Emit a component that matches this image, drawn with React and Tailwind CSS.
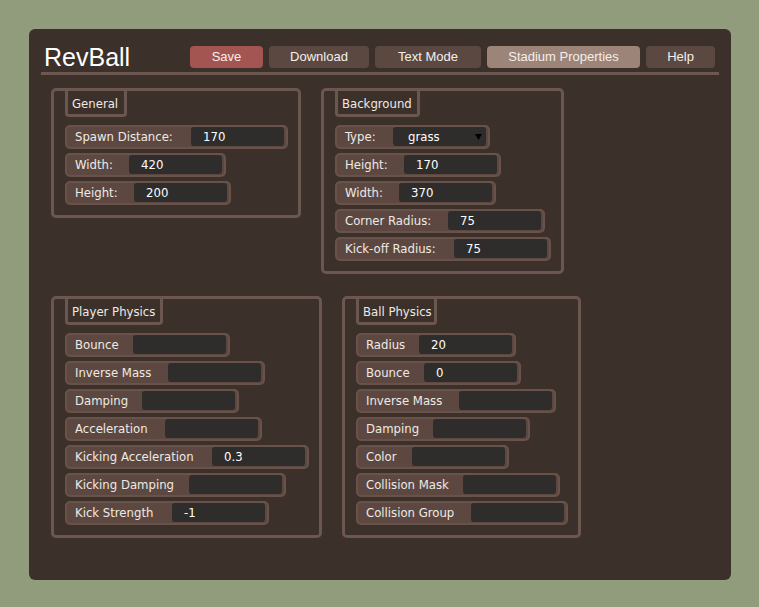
const buttons = [
  { label: 'Save', cls: 'w-[73px] bg-[#a35552]' },
  { label: 'Download', cls: 'w-[100px] bg-[#5b4941]' },
  { label: 'Text Mode', cls: 'w-[106px] bg-[#5b4941]' },
  { label: 'Stadium Properties', cls: 'w-[153px] bg-[#9c8478]' },
  { label: 'Help', cls: 'w-[69px] bg-[#5b4941]' },
];

const general = [
  { label: 'Spawn Distance:', w: 'w-[124px]', value: '170' },
  { label: 'Width:', w: 'w-[62px]', value: '420' },
  { label: 'Height:', w: 'w-[67px]', value: '200' },
];

const background = [
  { label: 'Height:', w: 'w-[67px]', value: '170' },
  { label: 'Width:', w: 'w-[62px]', value: '370' },
  { label: 'Corner Radius:', w: 'w-[111px]', value: '75' },
  { label: 'Kick-off Radius:', w: 'w-[117px]', value: '75' },
];

const player = [
  { label: 'Bounce', w: 'w-[66px]', value: '' },
  { label: 'Inverse Mass', w: 'w-[101px]', value: '' },
  { label: 'Damping', w: 'w-[75px]', value: '' },
  { label: 'Acceleration', w: 'w-[98px]', value: '' },
  { label: 'Kicking Acceleration', w: 'w-[145px]', value: '0.3' },
  { label: 'Kicking Damping', w: 'w-[122px]', value: '' },
  { label: 'Kick Strength', w: 'w-[105px]', value: '-1' },
];

const ball = [
  { label: 'Radius', w: 'w-[61px]', value: '20' },
  { label: 'Bounce', w: 'w-[66px]', value: '0' },
  { label: 'Inverse Mass', w: 'w-[101px]', value: '' },
  { label: 'Damping', w: 'w-[75px]', value: '' },
  { label: 'Color', w: 'w-[54px]', value: '' },
  { label: 'Collision Mask', w: 'w-[105px]', value: '' },
  { label: 'Collision Group', w: 'w-[113px]', value: '' },
];

const labelFont = "font-['DejaVu_Sans_Condensed','DejaVu_Sans',sans-serif]";

function Row({ label, w, children }) {
  return (
    <div className="flex items-start h-[24px] rounded-[5px] border-2 border-[#68524a] bg-[#5c4840]">
      <span className={`${w} pl-[8px] leading-[20px] whitespace-nowrap`}>{label}</span>
      {children}
    </div>
  );
}

function Field({ label, w, value }) {
  return (
    <Row label={label} w={w}>
      <div className="w-[93px] h-[19px] mr-[2px] rounded-[3px] bg-[#2e2d2c] pl-[12px] leading-[20px] text-white">{value}</div>
    </Row>
  );
}

function Group({ title, tw, children }) {
  return (
    <div className="rounded-[5px] border-[3px] border-[#6c5650] pl-[11px] pr-[10px] pb-[10px]">
      <div className={`${tw} -mt-[3px] h-[29px] rounded-b-[4px] border-x-[3px] border-b-[3px] border-[#6c5650] pl-[4px] pt-[8px] leading-4`}>
        {title}
      </div>
      <div className="mt-[8px] flex flex-col items-start gap-[4px]">{children}</div>
    </div>
  );
}

export default function App() {
  return (
    <div className="min-h-screen bg-[#919c7c] pt-[29px] pl-[29px]">
      <div className={`w-[702px] h-[551px] rounded-[6px] bg-[#3c302a] text-[13px] text-[#eeeae6] ${labelFont}`}>
        <div className="mx-[12px] pt-[17px] pb-[4px] pl-[3px] pr-[4px] flex items-start justify-between border-b-[3px] border-[#6c5850]">
          <h1 className="font-['Liberation_Sans',Arial,sans-serif] text-[25px] leading-[22px] text-white">RevBall</h1>
          <div className="flex gap-[6px] font-['Liberation_Sans',Arial,sans-serif]">
            {buttons.map((b) => (
              <button key={b.label} className={`${b.cls} h-[22px] rounded-[4px] text-[13px] leading-[22px] text-[#f3efeb]`}>
                {b.label}
              </button>
            ))}
          </div>
        </div>

        <div className="px-[22px] mt-[13px]">
          <div className="flex items-start gap-[20px]">
            <Group title="General" tw="w-[62px]">
              {general.map((f) => <Field key={f.label} {...f} />)}
            </Group>
            <Group title="Background" tw="w-[85px]">
              <Row label="Type:" w="w-[56px]">
                <div className="relative w-[93px] h-[19px] mr-[2px] rounded-[3px] bg-[#2e2d2c] pl-[15px] leading-[20px] text-white">
                  grass
                  <svg className="absolute right-[4px] top-[7px]" width="7" height="6" viewBox="0 0 7 6">
                    <polygon points="0,0 7,0 3.5,6" fill="#000" />
                  </svg>
                </div>
              </Row>
              {background.map((f) => <Field key={f.label} {...f} />)}
            </Group>
          </div>

          <div className="flex items-start gap-[20px] mt-[22px]">
            <Group title="Player Physics" tw="w-[98px]">
              {player.map((f) => <Field key={f.label} {...f} />)}
            </Group>
            <Group title="Ball Physics" tw="w-[81px]">
              {ball.map((f) => <Field key={f.label} {...f} />)}
            </Group>
          </div>
        </div>
      </div>
    </div>
  );
}
